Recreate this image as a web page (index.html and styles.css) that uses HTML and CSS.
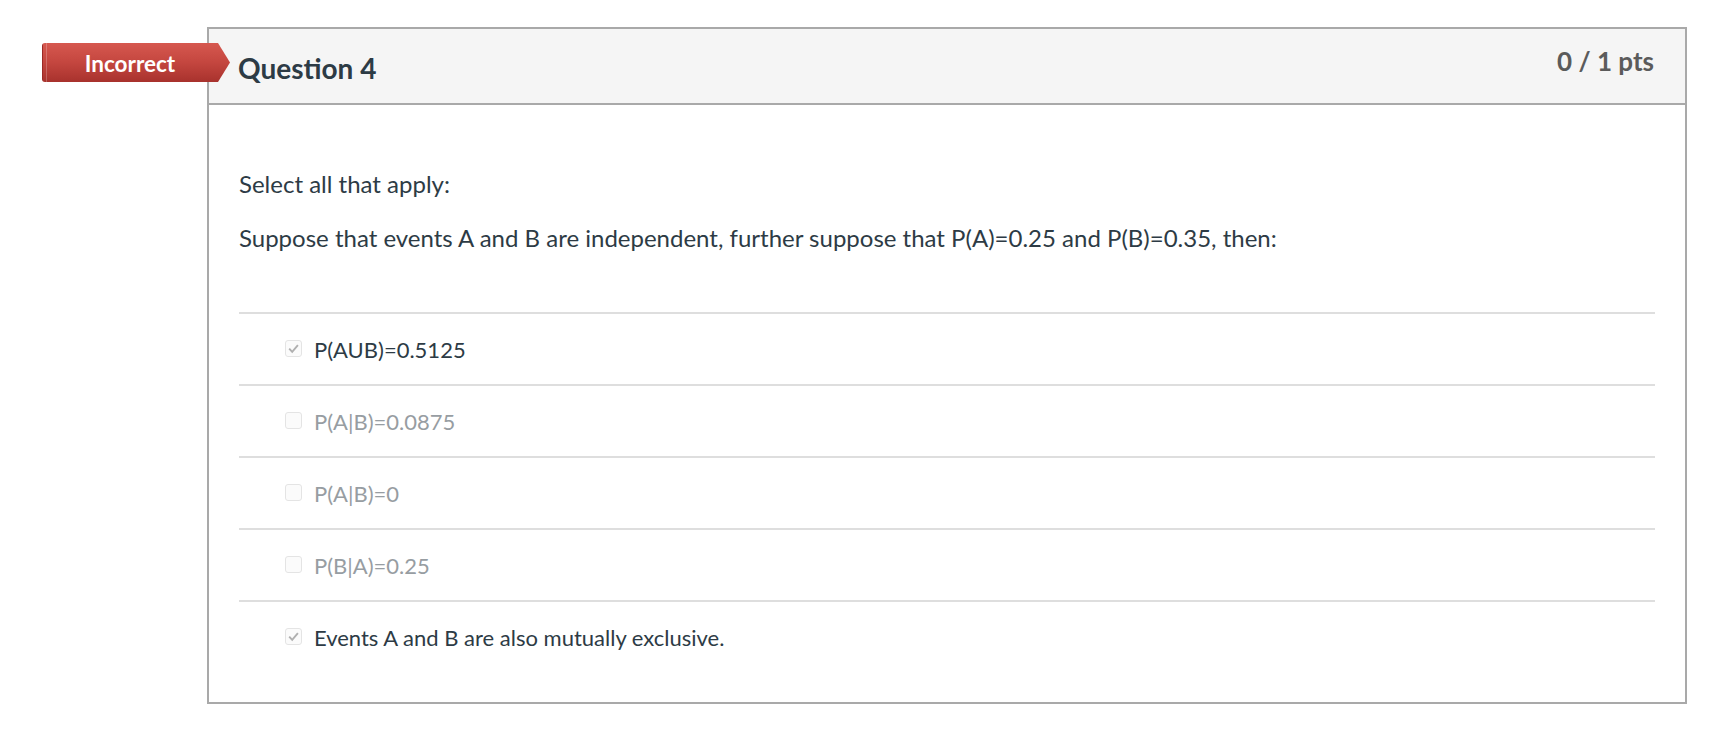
FILE: index.html
```html
<!DOCTYPE html>
<html lang="en">
<head>
<meta charset="utf-8">
<title>Question 4</title>
<link rel="stylesheet" href="styles.css">
</head>
<body>
<div class="quiz">
  <div class="card">
    <div class="badge"><span>Incorrect</span></div>
    <div class="card-header">
      <h2 class="title">Question 4</h2>
      <div class="pts">0 / 1 pts</div>
    </div>
    <div class="card-body">
      <div class="question-text">
        <p>Select all that apply:</p>
        <p>Suppose that events A and B are independent, further suppose that P(A)=0.25 and P(B)=0.35, then:</p>
      </div>
      <div class="answers">
        <div class="answer checked">
          <span class="box"><svg viewBox="0 0 17 17" width="17" height="17"><polyline points="4.2,8.6 7.2,11.8 12.9,5.1" fill="none" stroke="#b0b0b0" stroke-width="1.9"/></svg></span>
          <span class="label">P(AUB)=0.5125</span>
        </div>
        <div class="answer">
          <span class="box"></span>
          <span class="label">P(A|B)=0.0875</span>
        </div>
        <div class="answer">
          <span class="box"></span>
          <span class="label">P(A|B)=0</span>
        </div>
        <div class="answer">
          <span class="box"></span>
          <span class="label">P(B|A)=0.25</span>
        </div>
        <div class="answer checked">
          <span class="box"><svg viewBox="0 0 17 17" width="17" height="17"><polyline points="4.2,8.6 7.2,11.8 12.9,5.1" fill="none" stroke="#b0b0b0" stroke-width="1.9"/></svg></span>
          <span class="label">Events A and B are also mutually exclusive.</span>
        </div>
      </div>
    </div>
  </div>
</div>
</body>
</html>
```
FILE: styles.css
```css
html, body {
  margin: 0;
  padding: 0;
  background: #ffffff;
}

body {
  font-family: Lato, "Open Sans", "Liberation Sans", sans-serif;
  color: #2d3b45;
}

.quiz {
  padding: 27px 29px 0 207px;
}

.card {
  position: relative;
  width: 1480px;
  box-sizing: border-box;
  border: 2px solid #a9a9a9;
  background: #ffffff;
}

.badge {
  position: absolute;
  left: -167px;
  top: 14px;
  width: 188px;
  height: 39px;
  box-sizing: border-box;
  padding-right: 12px;
  display: flex;
  align-items: center;
  justify-content: center;
  border-radius: 3px 0 0 3px;
  clip-path: polygon(0 0, calc(100% - 12px) 0, 100% 50%, calc(100% - 12px) 100%, 0 100%);
  background:
    linear-gradient(90deg, #9a2a26 0, #9a2a26 1px, transparent 1px, transparent 4px, rgba(255,255,255,0.22) 4px, rgba(255,255,255,0.22) 5px, transparent 5px),
    linear-gradient(180deg, #d6584f 0%, #c4463f 50%, #a8322d 100%);
}

.badge span {
  color: #ffffff;
  font-weight: 700;
  font-size: 22.5px;
  line-height: 26px;
  margin-top: 2px;
}

.card-header {
  display: flex;
  justify-content: space-between;
  align-items: flex-start;
  height: 76px;
  box-sizing: border-box;
  padding: 17px 31px 0 29px;
  background: #f5f5f5;
  border-bottom: 2px solid #a9a9a9;
}

.title {
  margin: 6px 0 0 0;
  font-size: 28px;
  line-height: 32px;
  font-weight: 700;
  color: #2d3b45;
}

.pts {
  font-size: 26px;
  line-height: 30px;
  font-weight: 700;
  color: #5b5b5b;
}

.card-body {
  padding: 61px 30px 30px 30px;
}

.question-text p {
  margin: 0 0 18px 0;
  font-size: 24px;
  line-height: 36px;
}

.question-text p:last-child {
  margin-bottom: 56px;
}

.answer {
  display: flex;
  align-items: center;
  height: 72px;
  box-sizing: border-box;
  padding-left: 46px;
  border-top: 2px solid #dedede;
  font-size: 22px;
  line-height: 33px;
  color: #979da2;
}

.answer.checked {
  color: #2d3b45;
}

.box {
  width: 17px;
  height: 17px;
  box-sizing: border-box;
  border: 1px solid #e4e4e4;
  border-radius: 3px;
  background: #fbfbfb;
  margin-right: 12px;
  margin-top: -1px;
  position: relative;
  flex: none;
}

.box svg {
  position: absolute;
  left: -1px;
  top: -1px;
}
```
